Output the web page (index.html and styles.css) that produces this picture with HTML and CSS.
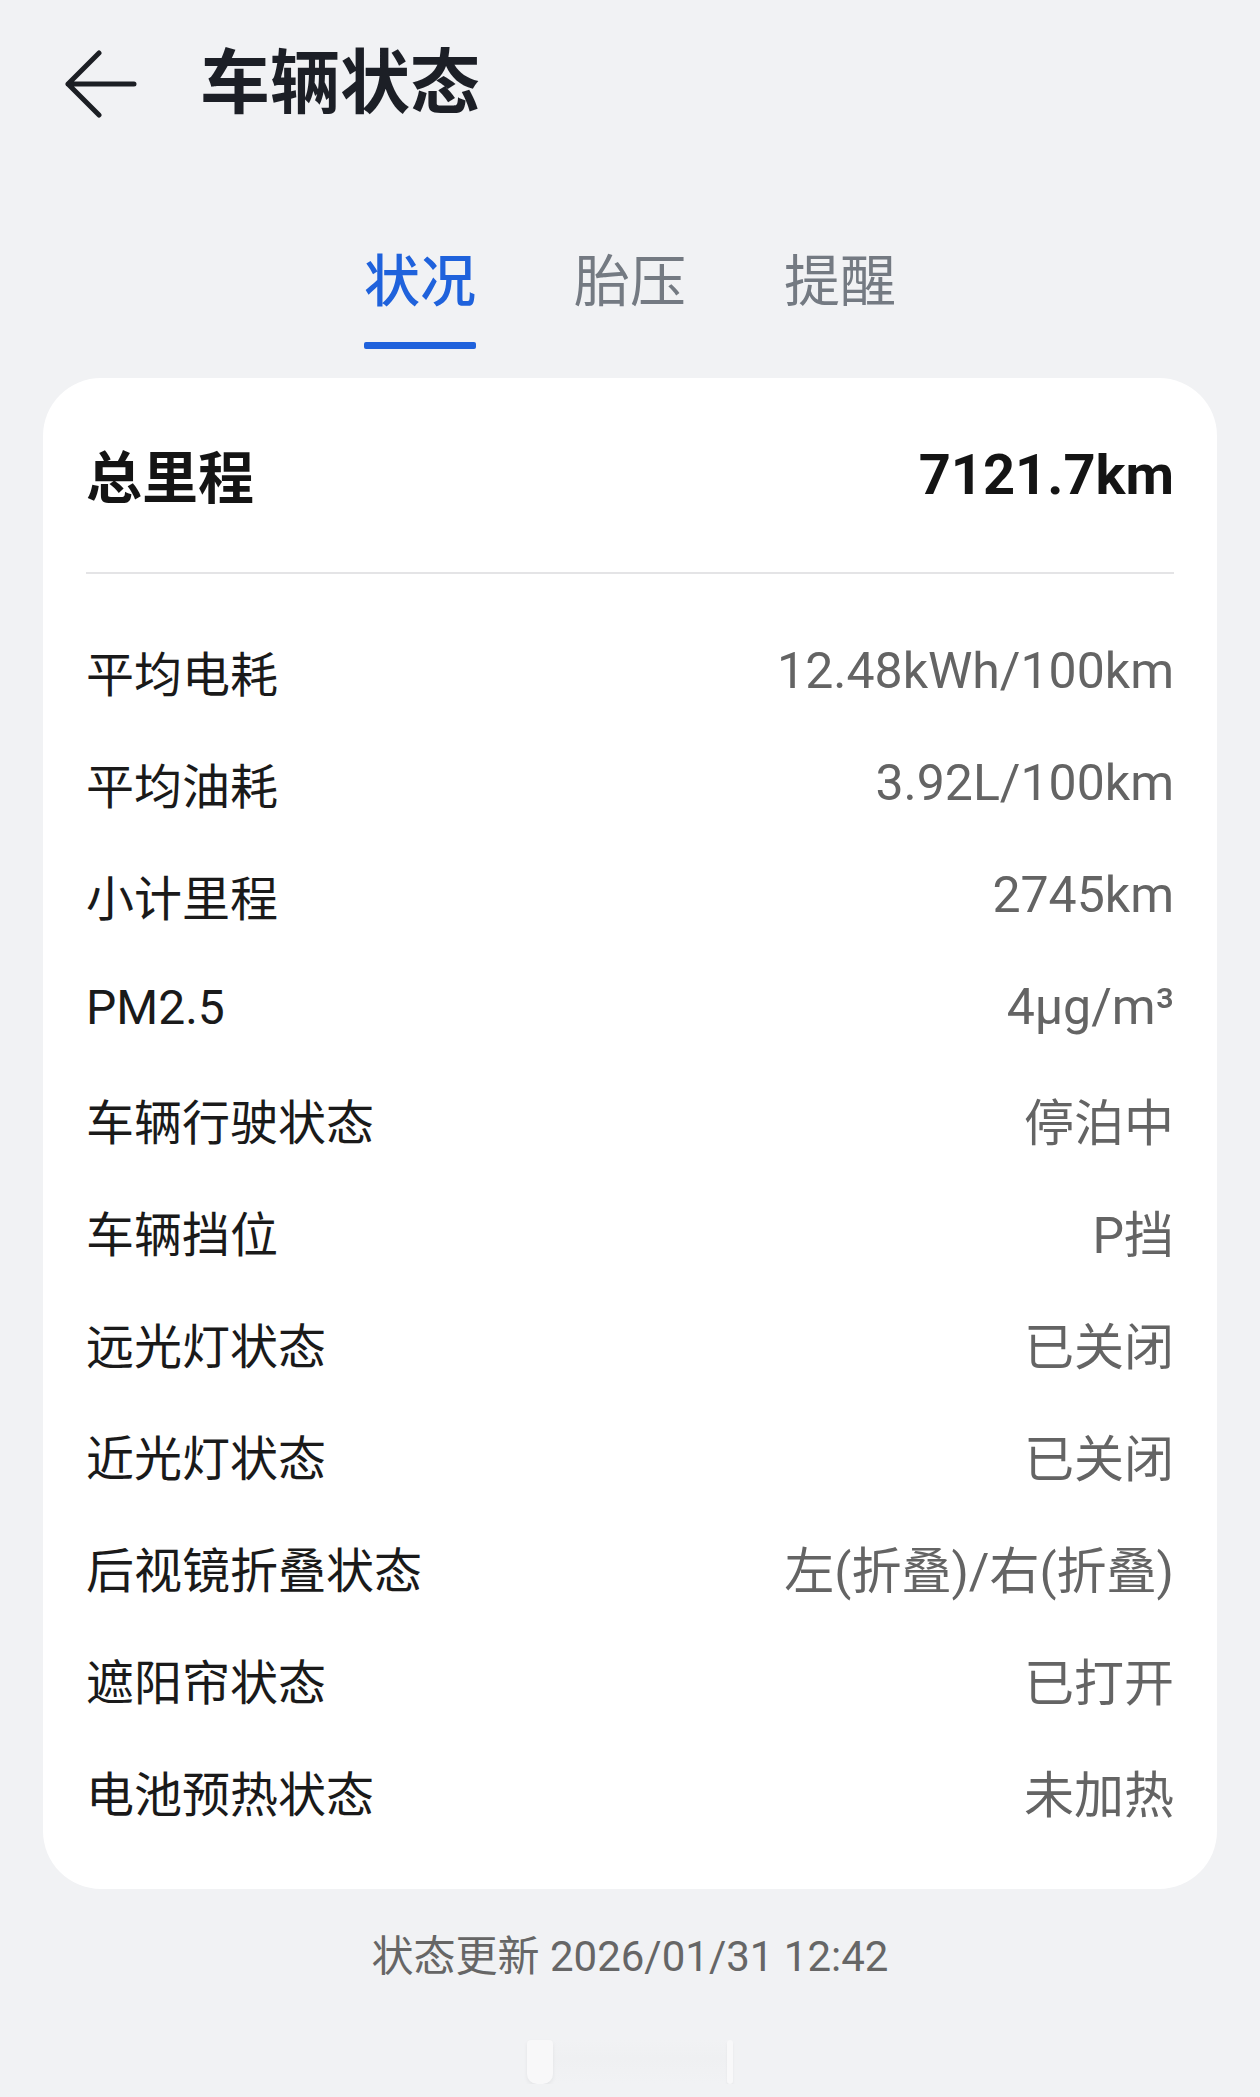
FILE: index.html
```html
<!DOCTYPE html>
<html lang="zh-CN">
<head>
    <meta charset="UTF-8">
    <title>车辆状态</title>
    <link rel="stylesheet" href="styles.css">
</head>
<body>

    <header class="topbar">
        <svg class="back" width="74" height="68" viewBox="0 0 74 68">
            <path d="M35 3 L4 34 L35 65 M4 34 H70" fill="none" stroke="#1c1f24" stroke-width="5" stroke-linecap="round" stroke-linejoin="round"/>
        </svg>
        <h1>车辆状态</h1>
    </header>

    <nav class="tabs">
        <a class="tab active">状况</a>
        <a class="tab">胎压</a>
        <a class="tab">提醒</a>
    </nav>

    <div class="card">
        <div class="total">
            <span class="total-label">总里程</span>
            <span class="total-value">7121.7km</span>
        </div>
        <div class="list">
            <div class="row"><span class="label">平均电耗</span><span class="value">12.48kWh/100km</span></div>
            <div class="row"><span class="label">平均油耗</span><span class="value">3.92L/100km</span></div>
            <div class="row"><span class="label">小计里程</span><span class="value">2745km</span></div>
            <div class="row"><span class="label">PM2.5</span><span class="value">4μg/m³</span></div>
            <div class="row"><span class="label">车辆行驶状态</span><span class="value">停泊中</span></div>
            <div class="row"><span class="label">车辆挡位</span><span class="value">P挡</span></div>
            <div class="row"><span class="label">远光灯状态</span><span class="value">已关闭</span></div>
            <div class="row"><span class="label">近光灯状态</span><span class="value">已关闭</span></div>
            <div class="row"><span class="label">后视镜折叠状态</span><span class="value">左(折叠)/右(折叠)</span></div>
            <div class="row"><span class="label">遮阳帘状态</span><span class="value">已打开</span></div>
            <div class="row"><span class="label">电池预热状态</span><span class="value">未加热</span></div>
        </div>
    </div>

    <p class="updated">状态更新 2026/01/31 12:42</p>

    <div class="home-bar">
        <span class="home-left"></span>
        <span class="home-right"></span>
    </div>

</body>
</html>
```

FILE: styles.css
```css
body {
    margin: 0;
    background-color: #f1f2f4;
    font-family: Roboto, "Noto Sans CJK SC", sans-serif;
    color: #1a1a1a;
}

.topbar {
    display: flex;
    align-items: center;
    height: 168px;
    padding-left: 64px;
}
.back {
    flex: none;
}
.topbar h1 {
    margin: 0 0 0 62px;
    font-size: 70px;
    line-height: 1;
    font-weight: 700;
    color: #1c1f26;
}

.tabs {
    display: flex;
    justify-content: center;
    gap: 98px;
    padding-top: 86px;
}
.tab {
    display: flex;
    flex-direction: column;
    align-items: center;
    font-size: 56px;
    line-height: 56px;
    color: #747a82;
}
.tab::after {
    content: "";
    width: 100%;
    height: 7px;
    margin-top: 32px;
    border-radius: 2px;
    background-color: transparent;
}
.tab.active {
    color: #1f62dc;
    font-weight: 500;
}
.tab.active::after {
    background-color: #1f62dc;
}

.card {
    margin: 29px 43px 0;
    padding: 0 43px;
    background-color: #fff;
    border-radius: 58px;
}
.total {
    display: flex;
    justify-content: space-between;
    align-items: center;
    height: 194px;
    border-bottom: 2px solid #e4e4e6;
}
.total-label {
    font-size: 56px;
    font-weight: 700;
    color: #141414;
    margin-top: -4px;
}
.total-value {
    font-size: 56px;
    font-weight: 700;
    color: #141414;
}

.list {
    padding: 41px 0 42px;
}
.row {
    display: flex;
    justify-content: space-between;
    align-items: center;
    height: 112px;
}
.label {
    font-size: 48px;
}
.value {
    font-size: 50px;
    color: #646464;
}

.updated {
    margin: 47px 0 0;
    text-align: center;
    font-size: 42px;
    line-height: 42px;
    color: #666;
}

.home-bar {
    display: flex;
    justify-content: space-between;
    width: 206px;
    height: 44px;
    margin: 62px auto 0;
    background: linear-gradient(#f1f2f4, #eff0f2 40%, #f1f2f4);
}
.home-left {
    width: 26px;
    border-radius: 4px 4px 10px 10px;
    background-color: #f8f8f9;
    box-shadow: 0 2px 4px rgba(0,0,0,0.06);
}
.home-right {
    width: 6px;
    border-radius: 3px;
    background-color: #f8f8f9;
    box-shadow: 0 2px 3px rgba(0,0,0,0.05);
}
```
